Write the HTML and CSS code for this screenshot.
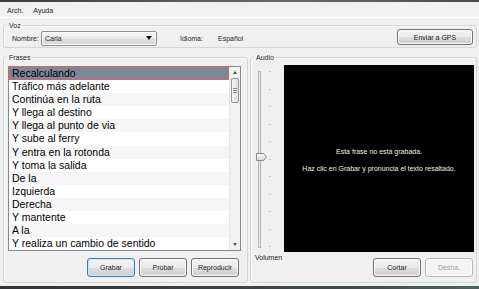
FILE: index.html
```html
<!DOCTYPE html>
<html lang="es">
<head>
  <meta charset="UTF-8">
  <title>Frases de voz</title>
  <link rel="stylesheet" href="styles.css">
</head>
<body>
  <div class="frame-top"></div>
  <nav class="menubar">
    <span>Arch.</span>
    <span>Ayuda</span>
  </nav>
  <main class="window">
    <fieldset class="group voz">
      <legend>Voz</legend>
      <div class="voz-row">
        <label class="nombre-label">Nombre:</label>
        <div class="combo"><span>Carla</span><span class="combo-arrow"></span></div>
        <span class="idioma-label">Idioma:</span>
        <span class="idioma-value">Español</span>
        <button class="btn gps-btn">Enviar a GPS</button>
      </div>
    </fieldset>

    <div class="panels">
      <fieldset class="group frases">
        <legend>Frases</legend>
        <div class="frases-body">
          <div class="listbox">
            <ul class="items">
              <li class="selected">Recalculando</li>
              <li>Tráfico más adelante</li>
              <li>Continúa en la ruta</li>
              <li>Y llega al destino</li>
              <li>Y llega al punto de via</li>
              <li>Y sube al ferry</li>
              <li>Y entra en la rotonda</li>
              <li>Y toma la salida</li>
              <li>De la</li>
              <li>Izquierda</li>
              <li>Derecha</li>
              <li>Y mantente</li>
              <li>A la</li>
              <li>Y realiza un cambio de sentido</li>
            </ul>
            <div class="scrollbar">
              <div class="scroll-arrow"><span class="tri-up"></span></div>
              <div class="scroll-thumb"><span></span><span></span><span></span></div>
              <div class="scroll-track"></div>
              <div class="scroll-arrow"><span class="tri-down"></span></div>
            </div>
          </div>
          <div class="button-row">
            <button class="btn focused">Grabar</button>
            <button class="btn">Probar</button>
            <button class="btn">Reproducir</button>
          </div>
        </div>
      </fieldset>

      <fieldset class="group audio">
        <legend>Audio</legend>
        <div class="audio-body">
          <svg class="slider" width="29" height="187" viewBox="0 0 29 187">
            <rect x="3.5" y="6.5" width="2" height="176" fill="#e9e9e9" stroke="#b4b4b4"/>
            <g stroke="#c8c8c8">
              <line x1="14" y1="6.5" x2="16" y2="6.5"/>
              <line x1="14" y1="24.5" x2="16" y2="24.5"/>
              <line x1="14" y1="41.5" x2="16" y2="41.5"/>
              <line x1="14" y1="59.5" x2="16" y2="59.5"/>
              <line x1="14" y1="76.5" x2="16" y2="76.5"/>
              <line x1="14" y1="94.5" x2="16" y2="94.5"/>
              <line x1="14" y1="111.5" x2="16" y2="111.5"/>
              <line x1="14" y1="129.5" x2="16" y2="129.5"/>
              <line x1="14" y1="146.5" x2="16" y2="146.5"/>
              <line x1="14" y1="164.5" x2="16" y2="164.5"/>
              <line x1="14" y1="181.5" x2="16" y2="181.5"/>
            </g>
            <defs>
              <linearGradient id="thumb" x1="0" y1="0" x2="0" y2="1">
                <stop offset="0" stop-color="#fbfbfb"/>
                <stop offset="1" stop-color="#d8d8d8"/>
              </linearGradient>
            </defs>
            <path d="M1.5 88.5 H8.5 L11.5 92 L8.5 95.5 H1.5 Z" fill="url(#thumb)" stroke="#8a8a8a"/>
          </svg>
          <div class="wave-panel">
            <p class="wave-text">Esta frase no está grabada.</p>
            <p class="wave-text">Haz clic en Grabar y pronuncia el texto resaltado.</p>
          </div>
          <span class="volumen-label">Volumen</span>
          <div class="button-row audio-buttons">
            <button class="btn">Cortar</button>
            <button class="btn" disabled>Desha.</button>
          </div>
        </div>
      </fieldset>
    </div>
  </main>
  <div class="frame-bottom"></div>
</body>
</html>
```

FILE: styles.css
```css
* {
  box-sizing: border-box;
}

body {
  margin: 0;
  width: 479px;
  height: 289px;
  display: flex;
  flex-direction: column;
  overflow: hidden;
  background-color: #f0f0f0;
  font-family: "Liberation Sans", Arial, sans-serif;
  font-size: 7px;
  color: #1e1e1e;
}

.frame-top {
  flex: none;
  height: 2px;
  background: linear-gradient(to right, #3c3c3c, #6a6a6a 60%, #4a4a4a);
}

.frame-bottom {
  flex: none;
  height: 3px;
  background: linear-gradient(to right, #2e3434, #3f4a4a 70%, #506060);
}

.menubar {
  flex: none;
  height: 16px;
  display: flex;
  align-items: center;
  gap: 10px;
  padding: 1px 0 0 7px;
  background-color: #f1f1f1;
  border-bottom: 1px solid #ffffff;
}

.window {
  flex: 1;
  min-height: 0;
  display: flex;
  flex-direction: column;
  padding: 3px 2px 3px 3px;
}

.group {
  margin: 0;
  padding: 0;
  min-width: 0;
  border: 1px solid #d5d5d5;
  border-radius: 3px;
  box-shadow: inset 1px 1px 0 #fafafa;
}

.group legend {
  margin-left: 3px;
  padding: 0 2px;
  line-height: 9px;
  font-size: 7px;
}

.voz {
  flex: none;
}

.voz-row {
  height: 17px;
  display: flex;
  align-items: center;
  padding: 0 3px 1px 8px;
}

.nombre-label {
  width: 29px;
}

.combo {
  width: 116px;
  height: 15px;
  display: flex;
  align-items: center;
  justify-content: space-between;
  padding: 0 4px 0 3px;
  border: 1px solid #8e8f8f;
  border-radius: 2px;
  background: linear-gradient(#f6f6f6, #ebebeb 50%, #dedede 51%, #d6d6d6);
  box-shadow: inset 0 0 0 1px #fbfbfb;
}

.combo-arrow {
  width: 0;
  height: 0;
  border-left: 3.5px solid transparent;
  border-right: 3.5px solid transparent;
  border-top: 4px solid #111;
}

.idioma-label {
  margin-left: 23px;
  width: 38px;
}

.btn {
  height: 19px;
  width: 48px;
  padding: 0;
  font-family: "Liberation Sans", Arial, sans-serif;
  font-size: 7px;
  color: #1e1e1e;
  border: 1px solid #707070;
  border-radius: 3px;
  background: linear-gradient(#f2f2f2, #ebebeb 50%, #dddddd 51%, #cfcfcf);
  box-shadow: inset 0 0 0 1px #fcfcfc;
}

.btn.focused {
  border-color: #3c7fb1;
  box-shadow: inset 0 0 0 1px #c8e6f7;
}

.btn:disabled {
  color: #a3a3a3;
  border-color: #b5b8ba;
  background: #f4f4f4;
}

.gps-btn {
  margin-left: auto;
  width: 76px;
  height: 16px;
  margin-top: -2px;
}

.panels {
  flex: 1;
  min-height: 0;
  display: flex;
  gap: 2px;
  margin-top: 5px;
}

.frases {
  width: 245px;
}

.frases-body {
  padding: 4px 6px 3px 4px;
}

.listbox {
  height: 185px;
  display: flex;
  border: 1px solid #828790;
  background-color: #ffffff;
}

.items {
  flex: 1;
  margin: 0;
  padding: 0;
  list-style: none;
  font-size: 10.5px;
  color: #000;
}

.items li {
  height: 13.1px;
  line-height: 13px;
  padding-left: 3px;
  white-space: nowrap;
}

.items li:nth-child(odd) {
  background-color: #f6f6f6;
}

.items li.selected {
  background-color: #7b8899;
  box-shadow: inset 0 0 0 1px #e06262;
}

.scrollbar {
  width: 11px;
  display: flex;
  flex-direction: column;
  background-color: #f1f1f1;
  border-left: 1px solid #e6e6e6;
}

.scroll-arrow {
  height: 11px;
  display: flex;
  align-items: center;
  justify-content: center;
}

.tri-up,
.tri-down {
  width: 0;
  height: 0;
  border-left: 2.5px solid transparent;
  border-right: 2.5px solid transparent;
}

.tri-up {
  border-bottom: 3px solid #505050;
}

.tri-down {
  border-top: 3px solid #505050;
}

.scroll-thumb {
  height: 25px;
  margin: 0 1px;
  display: flex;
  flex-direction: column;
  align-items: center;
  justify-content: center;
  gap: 1px;
  border: 1px solid #989898;
  border-radius: 2px;
  background: linear-gradient(to right, #f4f4f4, #dedede);
}

.scroll-thumb span {
  width: 4px;
  height: 1px;
  background-color: #8a8a8a;
}

.scroll-track {
  flex: 1;
}

.button-row {
  display: flex;
  justify-content: flex-end;
  gap: 4px;
  margin-top: 7px;
  padding-right: 2px;
}

.audio {
  flex: 1;
}

.audio-body {
  display: grid;
  grid-template-columns: 29px 1fr;
  grid-template-rows: 187px auto;
  padding: 3px 2px 3px 4px;
}

.wave-panel {
  display: flex;
  flex-direction: column;
  align-items: center;
  justify-content: center;
  gap: 8px;
  padding-top: 3px;
  background-color: #000000;
}

.wave-text {
  margin: 0;
  line-height: 9px;
  color: #f6f2d8;
}

.volumen-label {
  margin-top: 1px;
  line-height: 9px;
}

.audio-buttons {
  margin-top: 6px;
  padding-right: 1px;
}
```
